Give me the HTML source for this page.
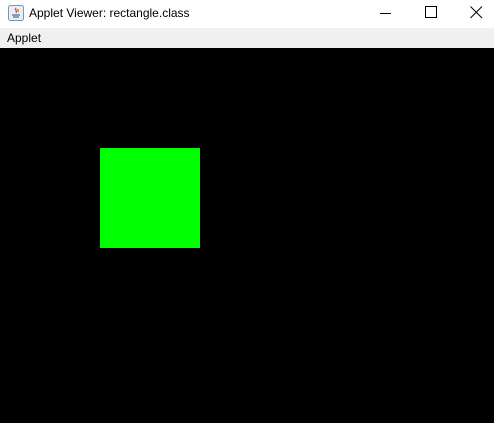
<!DOCTYPE html>
<html><head><style>
*{margin:0;padding:0;box-sizing:border-box}
body{width:494px;height:423px;overflow:hidden;background:#000;font-family:"Liberation Sans",sans-serif;position:relative}
#title{position:absolute;left:0;top:0;width:494px;height:28px;background:#fff}
#title .t{position:absolute;left:29px;top:6px;font-size:12px;color:#000}
#menu{position:absolute;left:0;top:28px;width:494px;height:20px;background:#f0f0f0}
#menu span{position:absolute;left:7px;top:3px;font-size:12px;color:#000}
#rect{position:absolute;left:100px;top:148px;width:100px;height:100px;background:#00ff00}
</style></head><body>
<div id="title">
<svg style="position:absolute;left:8px;top:5px" width="16" height="16" viewBox="0 0 16 16">
<rect x="0.5" y="0.5" width="15" height="15" rx="2" fill="#e8eef6" stroke="#7f93b3"/>
<path d="M8 3c-2 2 2 3 0 5M10 4c-1 1 1 2 0 3" stroke="#d9541e" fill="none" stroke-width="1.2"/>
<path d="M4 10h8M5 12h6" stroke="#4a6da6" stroke-width="1.2"/>
</svg>
<span class="t">Applet Viewer: rectangle.class</span>
<svg style="position:absolute;left:380px;top:8px" width="12" height="10"><line x1="0" y1="5.5" x2="11" y2="5.5" stroke="#000" stroke-width="1"/></svg>
<svg style="position:absolute;left:425px;top:6px" width="13" height="13"><rect x="0.5" y="0.5" width="11" height="11" fill="none" stroke="#000"/></svg>
<svg style="position:absolute;left:470px;top:6px" width="13" height="13"><path d="M0.5 0.5L12 12M12 0.5L0.5 12" stroke="#000" stroke-width="1"/></svg>
</div>
<div id="menu"><span>Applet</span></div>
<div id="rect"></div>
</body></html>
